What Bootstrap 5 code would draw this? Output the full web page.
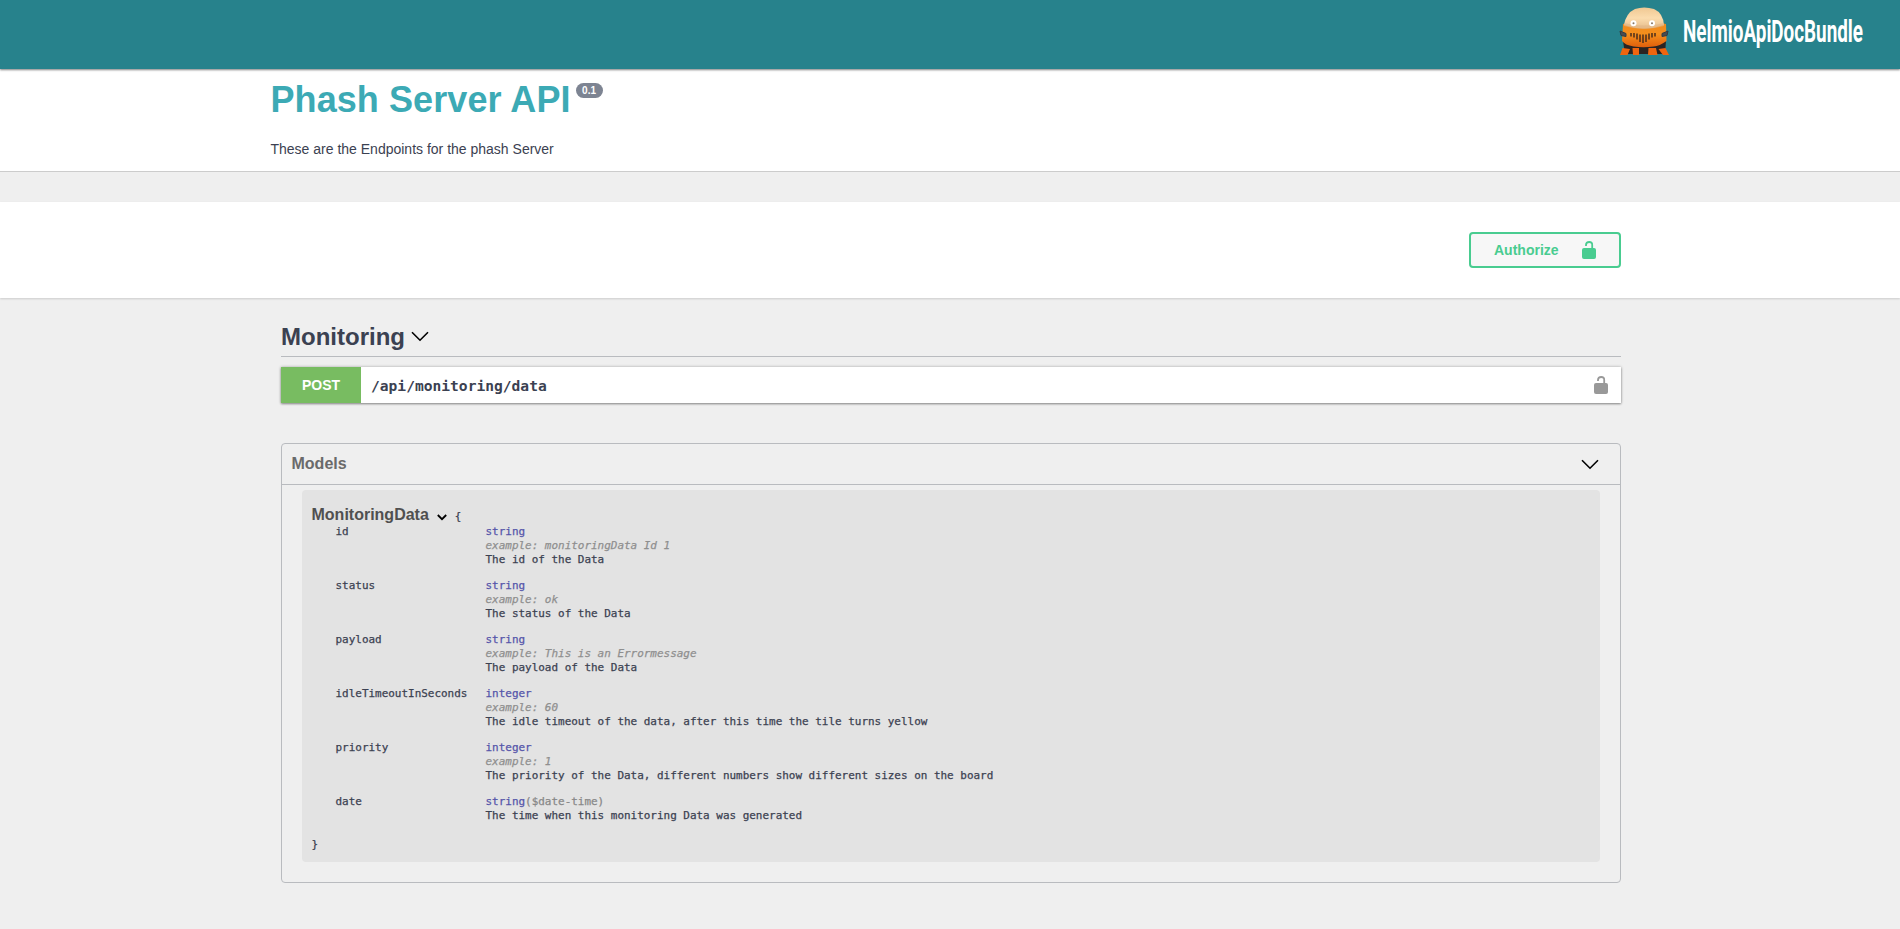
<!DOCTYPE html>
<html lang="en">
<head>
<meta charset="utf-8">
<meta name="viewport" content="width=device-width, initial-scale=1">
<title>Phash Server API</title>
<link href="https://cdn.jsdelivr.net/npm/bootstrap@5.3.0/dist/css/bootstrap.min.css" rel="stylesheet">
<style>
body{background:#efefef;color:#3b4151;font-family:"Liberation Sans",Arial,sans-serif;font-size:14px;min-height:929px;overflow-x:hidden}
.mono{font-family:"DejaVu Sans Mono",monospace}
.topbar{height:69px;background:#27828c;box-shadow:0 1px 2px rgba(0,0,0,.5);position:relative;z-index:1;padding:7px 25px 0 0}
.info-band{height:103px;background:#fff;border-bottom:1px solid #ccc}
.wrap{width:1360px;margin:0 auto;padding-left:.5px}
.wrap-in{width:1342px;margin:0 auto;padding-left:2px}
.api-title{font-size:36px;font-weight:700;color:#3caab5;line-height:41px;margin:0;padding-top:10px;letter-spacing:.08px}
.version{background:#7d8492;font-size:10px;line-height:15px;border-radius:57px;padding:0 6.500px;height:15px;margin:14px 0 0 5px;font-weight:700;color:#fff}
.api-desc{line-height:16px;margin:21px 0 0}
.auth-band{height:96px;margin-top:30px;background:#fff;box-shadow:0 1px 2px rgba(0,0,0,.15);padding-top:30px}
.auth-band .btn{width:152px;height:36px;border:2px solid #49cc90;background:#f7f7f7;color:#49cc90;font-weight:700;font-size:14px;border-radius:4px;padding:0 23px;line-height:32px}
.tag-head{height:59px;border-bottom:1px solid #b9bbbf;padding-top:25px}
.tag-head h2{font-size:24px;font-weight:700;margin:0;line-height:28px}
.tag-head svg{margin:8px 0 0 6px}
.opblock{height:36px;margin-top:10px;background:#fff;box-shadow:0 0 3px rgba(0,0,0,.25),0 1px 2px rgba(0,0,0,.35);padding-right:13px}
.method{width:80px;background:#78bc61;color:#fff;font-weight:700;line-height:36px;text-align:center;height:36px}
.path-text{font-size:14.6px;font-weight:700;padding-left:10px;line-height:38px;padding-top:2px}
.models{margin-top:40px;height:440px;border:1px solid #b9bbbf;border-radius:4px}
.models-head{height:41px;border-bottom:1px solid #b9bbbf;padding:0 21px 0 9.500px}
.models-head h3{font-size:16px;font-weight:700;margin:0;color:#6a6a6a;line-height:39px}
.models-head svg{margin-top:15px}
.model-box{margin:5px 20px 0;height:372px;background:#e3e3e3;border-radius:4px;padding:15px 10px 0 9.500px;font-size:10.96px;line-height:14px;-webkit-text-stroke:.25px currentColor}
.model-name{font-family:"Liberation Sans",Arial,sans-serif;font-size:16px;font-weight:700;color:#505050;line-height:20px;-webkit-text-stroke:0}
.props{padding-left:24px;margin:0}
.prop{margin-bottom:12px}
.prop dt{width:150px;font-weight:400}
.prop dd{margin:0}
.ptype{color:#55a}
.pfmt{color:#888}
.pex{color:#8f8f8f;font-style:italic}
.brace-end{padding-top:3px}
</style>
<script src="https://cdn.jsdelivr.net/npm/bootstrap@5.3.0/dist/js/bootstrap.bundle.min.js"></script>
</head>
<body>
<header class="topbar d-flex justify-content-end align-items-start">
<svg class="overflow-visible" width="256" height="54" viewBox="0 0 256 54" role="img" aria-label="NelmioApiDocBundle">
<defs>
<linearGradient id="dome" x2="0" y2="1"><stop offset="0" stop-color="#f0c893"/><stop offset=".5" stop-color="#fbdcae"/><stop offset="1" stop-color="#e6bd8b"/></linearGradient>
<linearGradient id="hull" x2="0" y2="1"><stop offset="0" stop-color="#ee8a20"/><stop offset=".5" stop-color="#f58f1c"/><stop offset="1" stop-color="#e05f0c"/></linearGradient>
</defs>
<path d="M4 34h43l-1 13H6z" fill="#2b2422"/>
<path d="M3.500 41l7.500 1-2.500 6H1zM13.500 41h6.500v7h-6zM29.500 41h7.500l1.500 7h-9.500zM39.500 42l7-1 3.500 7h-6z" fill="#ee650f"/>
<path d="M4 17q21-6 43 0l.500 17q-7 5-13 5.500-10 1.500-20 0Q6 38 3 34z" fill="url(#hull)"/>
<path d="M5 18Q7 6 16 2q9-3 19 0 9 4 10 16-20 7-40 0z" fill="url(#dome)"/>
<path d="M5 16q20 5 40 0v3q-20 6-40 0z" fill="#dfb486" opacity=".6"/>
<circle cx="14.500" cy="16.300" r="3" fill="#fff"/><circle cx="33" cy="16.300" r="3" fill="#fff"/>
<circle cx="14.500" cy="16.300" r="1" fill="#876"/><circle cx="33" cy="16.300" r="1" fill="#876"/>
<path d="M12 26v3.500M15 26v4.500M18 26.500v6M21 27.500v7.500M24 27.500v8.500M27 27.500v7.500M30 26.500v6M33 26v4.500M36 26v3.500" stroke="#54331c" stroke-width="1.600"/>
<path d="M1 24l6 2.500v3l-5-1zM49 24l-6 2.500v3l5-1z" fill="#494c50" stroke="#333a40"/>
<text x="64" y="35" textLength="180" lengthAdjust="spacingAndGlyphs" font-family="Roboto, sans-serif" font-weight="700" font-size="31" fill="#fff">NelmioApiDocBundle</text>
</svg>
</header>
<section class="info-band">
<div class="wrap">
<div class="d-flex align-items-start"><h1 class="api-title">Phash Server API</h1><span class="version">0.1</span></div>
<p class="api-desc">These are the Endpoints for the phash Server</p>
</div>
</section>
<section class="auth-band">
<div class="wrap-in d-flex justify-content-end">
<button class="btn d-flex justify-content-between align-items-center" type="button"><span>Authorize</span>
<svg width="14" height="18" viewBox="0 0 14 18"><rect y="7" width="14" height="11" rx="2" fill="#49cc90"/><path d="M4 5V4Q4 1 7.200 1T10.200 4V8" fill="none" stroke="#49cc90" stroke-width="1.800"/></svg></button>
</div>
</section>
<main class="wrap-in">
<div class="tag-head d-flex align-items-start"><h2>Monitoring</h2>
<svg width="18" height="12" viewBox="0 0 18 12"><path d="M1 1.200l8 8 8-8" fill="none" stroke="#000" stroke-width="1.600"/></svg></div>
<div class="opblock d-flex align-items-center"><span class="method">POST</span><span class="path-text mono flex-grow-1">/api/monitoring/data</span>
<svg width="14" height="18" viewBox="0 0 14 18"><rect y="7" width="14" height="11" rx="2" fill="#999"/><path d="M4 5V4Q4 1 7.200 1T10.200 4V8" fill="none" stroke="#999" stroke-width="1.800"/></svg></div>
<section class="models">
<div class="models-head d-flex justify-content-between align-items-start"><h3>Models</h3>
<svg width="18" height="12" viewBox="0 0 18 12"><path d="M1 1.200l8 8 8-8" fill="none" stroke="#000" stroke-width="1.600"/></svg></div>
<div class="model-box mono">
<div class="d-flex align-items-center"><span class="model-name">MonitoringData</span>
<svg class="ms-2 mt-1" width="10" height="7" viewBox="0 0 10 7"><path d="M.8 1l4.200 4.200L9.200 1" fill="none" stroke="#000" stroke-width="1.800"/></svg><span class="ms-2 pt-1">{</span></div>
<dl class="props">
<div class="prop d-flex"><dt>id</dt><dd><div class="ptype">string</div><div class="pex">example: monitoringData Id 1</div><div>The id of the Data</div></dd></div>
<div class="prop d-flex"><dt>status</dt><dd><div class="ptype">string</div><div class="pex">example: ok</div><div>The status of the Data</div></dd></div>
<div class="prop d-flex"><dt>payload</dt><dd><div class="ptype">string</div><div class="pex">example: This is an Errormessage</div><div>The payload of the Data</div></dd></div>
<div class="prop d-flex"><dt>idleTimeoutInSeconds</dt><dd><div class="ptype">integer</div><div class="pex">example: 60</div><div>The idle timeout of the data, after this time the tile turns yellow</div></dd></div>
<div class="prop d-flex"><dt>priority</dt><dd><div class="ptype">integer</div><div class="pex">example: 1</div><div>The priority of the Data, different numbers show different sizes on the board</div></dd></div>
<div class="prop d-flex"><dt>date</dt><dd><div><span class="ptype">string</span><span class="pfmt">($date-time)</span></div><div>The time when this monitoring Data was generated</div></dd></div>
</dl>
<div class="brace-end">}</div>
</div>
</section>
</main>
</body>
</html>
